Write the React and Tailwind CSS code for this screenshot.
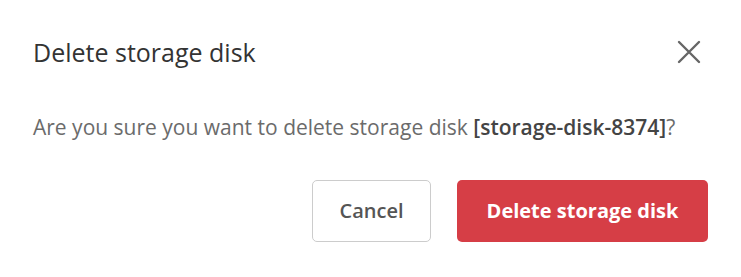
const DeleteDiskDialog = () => {
    return (
        <div className="h-[277px] w-[741px] bg-white font-['Open_Sans',sans-serif]">
            <div className="flex items-center justify-between pl-[33px] pr-[40px] pt-[36px]">
                <h2 className="text-[25px] leading-[32px] text-[#333333]">Delete storage disk</h2>
                <button className="text-[#666666]" aria-label="Close">
                    <svg width="24" height="24" viewBox="0 0 24 24" fill="none">
                        <path d="M2 2 L22 22 M22 2 L2 22" stroke="currentColor" strokeWidth="2.4" strokeLinecap="round" />
                    </svg>
                </button>
            </div>

            <p className="mt-[45px] pl-[33px] text-[21px] leading-[28px] text-[#6b6b6b]">
                Are you sure you want to delete storage disk{" "}
                <span className="font-semibold text-[#444444]">[storage-disk-8374]</span>?
            </p>

            <div className="mt-[39px] flex justify-end gap-[26px] pr-[33px]">
                <button className="h-[62px] w-[119px] rounded-[5px] border border-[#cccccc] bg-white text-[20px] font-semibold text-[#555555]">
                    Cancel
                </button>
                <button className="h-[62px] w-[251px] rounded-[5px] bg-[#d63e46] text-[20px] font-bold text-white">
                    Delete storage disk
                </button>
            </div>
        </div>
    );
};

export default DeleteDiskDialog;
